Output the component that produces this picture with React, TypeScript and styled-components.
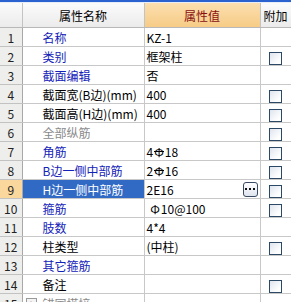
import React from 'react'
import styled, { createGlobalStyle } from 'styled-components'

type Tone = 'link' | 'plain' | 'muted'

interface PropRow {
  no: number
  name: string
  tone: Tone
  value: React.ReactNode
  check: boolean
  selected?: boolean
  editing?: boolean
  group?: boolean
}

const GlobalStyle = createGlobalStyle`
  html, body { margin: 0; padding: 0; overflow: hidden; background: #fff; }
  body { font-family: "Noto Sans CJK SC", "DejaVu Sans", sans-serif; font-size: 12px; color: #000; }
`

const Grade = ({ kind }: { kind: 'A' | 'C' }) => <Sym $kind={kind}>Φ</Sym>

const rows: PropRow[] = [
  { no: 1, name: '名称', tone: 'link', value: 'KZ-1', check: false },
  { no: 2, name: '类别', tone: 'link', value: '框架柱', check: true },
  { no: 3, name: '截面编辑', tone: 'link', value: '否', check: false },
  { no: 4, name: '截面宽(B边)(mm)', tone: 'plain', value: '400', check: true },
  { no: 5, name: '截面高(H边)(mm)', tone: 'plain', value: '400', check: true },
  { no: 6, name: '全部纵筋', tone: 'muted', value: '', check: true },
  { no: 7, name: '角筋', tone: 'link', value: <>4<Grade kind="C" />18</>, check: true },
  { no: 8, name: 'B边一侧中部筋', tone: 'link', value: <>2<Grade kind="C" />16</>, check: true },
  { no: 9, name: 'H边一侧中部筋', tone: 'link', value: '2E16', check: true, selected: true, editing: true },
  { no: 10, name: '箍筋', tone: 'link', value: <>&nbsp;<Grade kind="A" />10@100</>, check: true },
  { no: 11, name: '肢数', tone: 'link', value: '4*4', check: false },
  { no: 12, name: '柱类型', tone: 'plain', value: '(中柱)', check: true },
  { no: 13, name: '其它箍筋', tone: 'link', value: '', check: false },
  { no: 14, name: '备注', tone: 'plain', value: '', check: true },
  { no: 15, name: '锚固搭接', tone: 'muted', value: '', check: false, group: true },
]

export default function App() {
  return (
    <>
      <GlobalStyle />
      <Frame>
        <TitleEdge />
        <Grid>
          <colgroup>
            <col style={{ width: 22 }} />
            <col style={{ width: 122 }} />
            <col style={{ width: 116 }} />
            <col style={{ width: 31 }} />
          </colgroup>
          <thead>
            <tr>
              <HeadCell $variant="corner" />
              <HeadCell $variant="plain">属性名称</HeadCell>
              <HeadCell $variant="accent">属性值</HeadCell>
              <HeadCell $variant="plain">附加</HeadCell>
            </tr>
          </thead>
          <tbody>
            {rows.map(r => (
              <tr key={r.no}>
                <NoCell $active={!!r.selected}>{r.no}</NoCell>
                <NameCell $selected={!!r.selected}>
                  <NameInner>
                    {r.group && <Expander>+</Expander>}
                    <NameText $tone={r.tone} $selected={!!r.selected}>{r.name}</NameText>
                  </NameInner>
                </NameCell>
                <ValueCell>
                  <ValueInner>
                    <span>{r.value}</span>
                    {r.editing && (
                      <MoreButton>
                        <Dot />
                        <Dot />
                        <Dot />
                      </MoreButton>
                    )}
                  </ValueInner>
                </ValueCell>
                <CheckCell>{r.check && <Check />}</CheckCell>
              </tr>
            ))}
          </tbody>
        </Grid>
      </Frame>
    </>
  )
}

const Frame = styled.div`
  width: 291px;
  height: 302px;
  overflow: hidden;
  background: #fff;
`

const TitleEdge = styled.div`
  height: 2px;
  background: #2a62cf;
  border-bottom: 1px solid #e8eef8;
`

const Grid = styled.table`
  width: 291px;
  table-layout: fixed;
  border-collapse: collapse;
  font-size: 12px;
`

const HeadCell = styled.th<{ $variant: 'corner' | 'plain' | 'accent' }>`
  height: 24px;
  padding: 0;
  font-weight: normal;
  font-size: 12px;
  text-align: center;
  white-space: nowrap;
  overflow: hidden;
  border-right: 1px solid #c3c3c3;
  border-bottom: 1px solid #b8b8b8;
  color: ${p => (p.$variant === 'accent' ? '#8a1010' : '#000')};
  background: ${p =>
    p.$variant === 'accent'
      ? 'linear-gradient(#fbdfae, #f6cb86)'
      : 'linear-gradient(#fbfbfb, #ebebeb)'};
`

const NoCell = styled.td<{ $active: boolean }>`
  height: 18px;
  padding: 0;
  text-align: center;
  font-size: 12px;
  color: #222;
  background: ${p => (p.$active ? '#f9d79d' : '#eeeeec')};
  border-right: 1px solid #a8a8a8;
  border-bottom: 1px solid #c2c2c2;
`

const NameCell = styled.td<{ $selected: boolean }>`
  height: 18px;
  padding: 0;
  background: ${p => (p.$selected ? '#316ac5' : '#fff')};
  border-right: 1px solid #c8c8c8;
  border-bottom: 1px solid #c8c8c8;
`

const NameInner = styled.div`
  display: flex;
  align-items: center;
  height: 18px;
  padding-left: 20px;
  position: relative;
  white-space: nowrap;
  overflow: hidden;
`

const NameText = styled.span<{ $tone: Tone; $selected: boolean }>`
  color: ${p =>
    p.$selected ? '#fff' : p.$tone === 'link' ? '#1422b8' : p.$tone === 'muted' ? '#8a8a8a' : '#000'};
`

const Expander = styled.span`
  position: absolute;
  left: 3px;
  top: 4px;
  width: 9px;
  height: 9px;
  border: 1px solid #9a9a9a;
  background: #f4f4f4;
  font-size: 9px;
  line-height: 9px;
  text-align: center;
  color: #333;
`

const ValueCell = styled.td`
  height: 18px;
  padding: 0;
  border-right: 1px solid #c8c8c8;
  border-bottom: 1px solid #c8c8c8;
`

const ValueInner = styled.div`
  display: flex;
  align-items: center;
  justify-content: space-between;
  height: 18px;
  padding: 0 2px 0 2px;
  white-space: nowrap;
  overflow: hidden;
`

const Sym = styled.span<{ $kind: 'A' | 'C' }>`
  position: relative;
  display: inline-block;
  margin: 0 1px;
  &::after {
    content: '';
    display: ${p => (p.$kind === 'C' ? 'block' : 'none')};
    position: absolute;
    left: 0;
    right: 0;
    top: 50%;
    height: 1px;
    background: currentColor;
  }
`

const MoreButton = styled.span`
  display: inline-flex;
  align-items: center;
  justify-content: center;
  gap: 2px;
  width: 13px;
  height: 13px;
  flex-shrink: 0;
  border: 1px solid #3a4a62;
  border-radius: 3px;
  background: linear-gradient(#ffffff, #dfe4ee);
`

const Dot = styled.span`
  width: 2px;
  height: 2px;
  background: #111;
`

const CheckCell = styled.td`
  height: 18px;
  padding: 0;
  text-align: center;
  border-bottom: 1px solid #c8c8c8;
`

const Check = styled.span`
  display: inline-block;
  vertical-align: middle;
  width: 11px;
  height: 11px;
  border: 1px solid #2b4867;
  background: linear-gradient(135deg, #dfe5ee, #ffffff 80%);
`
